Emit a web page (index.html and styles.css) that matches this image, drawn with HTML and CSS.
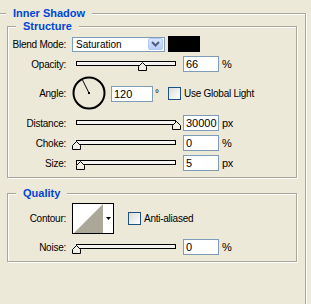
FILE: index.html
```html
<!DOCTYPE html>
<html lang="en">
<head>
    <meta charset="UTF-8">
    <title>Inner Shadow</title>
    <link rel="stylesheet" href="styles.css">
</head>
<body>
    <fieldset class="group outer">
        <legend>Inner Shadow</legend>

        <fieldset class="group">
            <legend>Structure</legend>
            <div class="row">
                <label class="lbl">Blend Mode:</label>
                <div class="combo">
                    <span class="combo-text">Saturation</span>
                    <span class="combo-btn">
                        <svg width="9" height="6" viewBox="0 0 9 6"><path d="M1 1L4.5 4.5L8 1" fill="none" stroke="#4d6185" stroke-width="2"/></svg>
                    </span>
                </div>
                <span class="swatch"></span>
            </div>
            <div class="row">
                <label class="lbl">Opacity:</label>
                <div class="slider">
                    <div class="track"></div>
                    <svg class="thumb" style="left: 66%" width="9" height="9" viewBox="0 0 9 9"><path d="M0.5 8.5V4.5L4.5 0.5L8.5 4.5V8.5Z"/></svg>
                </div>
                <input class="num" type="text" value="66">
                <span class="unit">%</span>
            </div>
            <div class="row angle-row">
                <label class="lbl">Angle:</label>
                <svg class="dial" width="34" height="34" viewBox="0 0 34 34">
                    <circle cx="17" cy="17" r="15.5" fill="none" stroke="#000" stroke-width="2"/>
                    <line x1="17" y1="17" x2="10" y2="3" stroke="#000"/>
                    <rect x="16" y="16" width="2" height="2"/>
                </svg>
                <input class="num wide" type="text" value="120">
                <span class="deg">°</span>
                <span class="check"></span>
                <span>Use Global Light</span>
            </div>
            <div class="row">
                <label class="lbl">Distance:</label>
                <div class="slider">
                    <div class="track"></div>
                    <svg class="thumb" style="left: 100%" width="9" height="9" viewBox="0 0 9 9"><path d="M0.5 8.5V4.5L4.5 0.5L8.5 4.5V8.5Z"/></svg>
                </div>
                <input class="num" type="text" value="30000">
                <span class="unit">px</span>
            </div>
            <div class="row">
                <label class="lbl">Choke:</label>
                <div class="slider">
                    <div class="track"></div>
                    <svg class="thumb" style="left: 0%" width="9" height="9" viewBox="0 0 9 9"><path d="M0.5 8.5V4.5L4.5 0.5L8.5 4.5V8.5Z"/></svg>
                </div>
                <input class="num" type="text" value="0">
                <span class="unit">%</span>
            </div>
            <div class="row">
                <label class="lbl">Size:</label>
                <div class="slider">
                    <div class="track"></div>
                    <svg class="thumb" style="left: 4%" width="9" height="9" viewBox="0 0 9 9"><path d="M0.5 8.5V4.5L4.5 0.5L8.5 4.5V8.5Z"/></svg>
                </div>
                <input class="num" type="text" value="5">
                <span class="unit">px</span>
            </div>
        </fieldset>

        <fieldset class="group quality">
            <legend>Quality</legend>
            <div class="row contour-row">
                <label class="lbl">Contour:</label>
                <div class="contour">
                    <svg class="contour-preview" width="31" height="29" viewBox="0 0 31 29"><polygon points="1,29 30,0 30,29" fill="#aca899"/></svg>
                    <span class="contour-arrow">
                        <svg width="5" height="3" viewBox="0 0 5 3"><polygon points="0,0 5,0 2.5,3" fill="#000"/></svg>
                    </span>
                </div>
                <span class="check aa"></span>
                <span>Anti-aliased</span>
            </div>
            <div class="row">
                <label class="lbl">Noise:</label>
                <div class="slider">
                    <div class="track"></div>
                    <svg class="thumb" style="left: 0%" width="9" height="9" viewBox="0 0 9 9"><path d="M0.5 8.5V4.5L4.5 0.5L8.5 4.5V8.5Z"/></svg>
                </div>
                <input class="num" type="text" value="0">
                <span class="unit">%</span>
            </div>
        </fieldset>
    </fieldset>
</body>
</html>
```

FILE: styles.css
```css
body {
    margin: 0;
    height: 304px;
    overflow: hidden;
    background-color: #ece9d8;
    font-family: "Liberation Sans", Arial, sans-serif;
    font-size: 10px;
    letter-spacing: -0.25px;
    color: #000;
}
.group {
    box-sizing: border-box;
    margin: 0;
    padding: 3px 0 6px 0;
    border: 1px solid #aca899;
    box-shadow: inset 1px 1px 0 #fff, 1px 1px 0 #fff;
    min-inline-size: 0;
}
.group legend {
    margin-left: 8px;
    padding: 0 7px;
    font-size: 11px;
    font-weight: bold;
    letter-spacing: 0;
    line-height: 13px;
    color: #0046d5;
    background-color: #ece9d8;
}
.outer {
    width: 308px;
    height: 297px;
    margin: 7px 0 0 -2px;
    padding: 0 8px;
    border-bottom: 0;
    box-shadow: inset 1px 1px 0 #fff, 1px 0 0 #fff;
}
.outer > legend {
    margin-left: -1px;
}
.quality {
    margin-top: 9px;
}
.row {
    display: flex;
    align-items: center;
    height: 16px;
    margin-bottom: 4px;
    white-space: nowrap;
}
.row:last-child {
    margin-bottom: 0;
}
.angle-row {
    height: 35px;
}
.contour-row {
    height: 31px;
    margin-bottom: 5px;
}
.lbl {
    flex: none;
    width: 58px;
    margin-right: 6px;
    text-align: right;
}
.combo {
    flex: none;
    display: flex;
    align-items: center;
    box-sizing: border-box;
    width: 93px;
    height: 15px;
    margin-right: 3px;
    padding: 0 1px 0 3px;
    border: 1px solid #7f9db9;
    background-color: #fff;
    letter-spacing: 0;
}
.combo-text {
    flex: 1;
}
.combo-btn {
    display: flex;
    align-items: center;
    justify-content: center;
    box-sizing: border-box;
    width: 15px;
    height: 12px;
    border: 1px solid #b4c8f6;
    border-radius: 2px;
    background: linear-gradient(#dbe6fd, #b9cdf8);
}
.swatch {
    flex: none;
    width: 32px;
    height: 16px;
    background-color: #000;
}
.slider {
    flex: none;
    position: relative;
    width: 100px;
    height: 16px;
    margin: 0 7px 0 4px;
}
.track {
    box-sizing: border-box;
    height: 5px;
    margin-top: 5px;
    border: 1px solid #000;
    background-color: #f4f3ee;
}
.thumb {
    position: absolute;
    top: 6px;
    margin-left: -4px;
}
.thumb path {
    fill: #f1efe4;
    stroke: #000;
}
.num {
    flex: none;
    box-sizing: border-box;
    width: 36px;
    height: 16px;
    margin: 0;
    padding: 0 0 0 2px;
    border: 1px solid #7f9db9;
    background-color: #fff;
    font-family: "Liberation Sans", Arial, sans-serif;
    font-size: 11px;
    color: #000;
    outline: none;
}
.num.wide {
    width: 42px;
}
.unit {
    margin-left: 3px;
    font-size: 11px;
}
.dial {
    flex: none;
    align-self: flex-start;
    margin-right: 5px;
}
.deg {
    flex: none;
    width: 13px;
    margin-left: 2px;
}
.check {
    flex: none;
    box-sizing: border-box;
    width: 13px;
    height: 13px;
    margin-right: 3px;
    border: 1px solid #1c5180;
    background: linear-gradient(135deg, #dcdcd7, #fff);
}
.check.aa {
    margin-left: 14px;
}
.contour {
    flex: none;
    display: flex;
    box-sizing: border-box;
    width: 42px;
    height: 31px;
    border: 1px solid #000;
    background-color: #fff;
}
.contour-preview {
    flex: none;
}
.contour-arrow {
    display: flex;
    align-items: center;
    justify-content: center;
    flex: 1;
}
```
